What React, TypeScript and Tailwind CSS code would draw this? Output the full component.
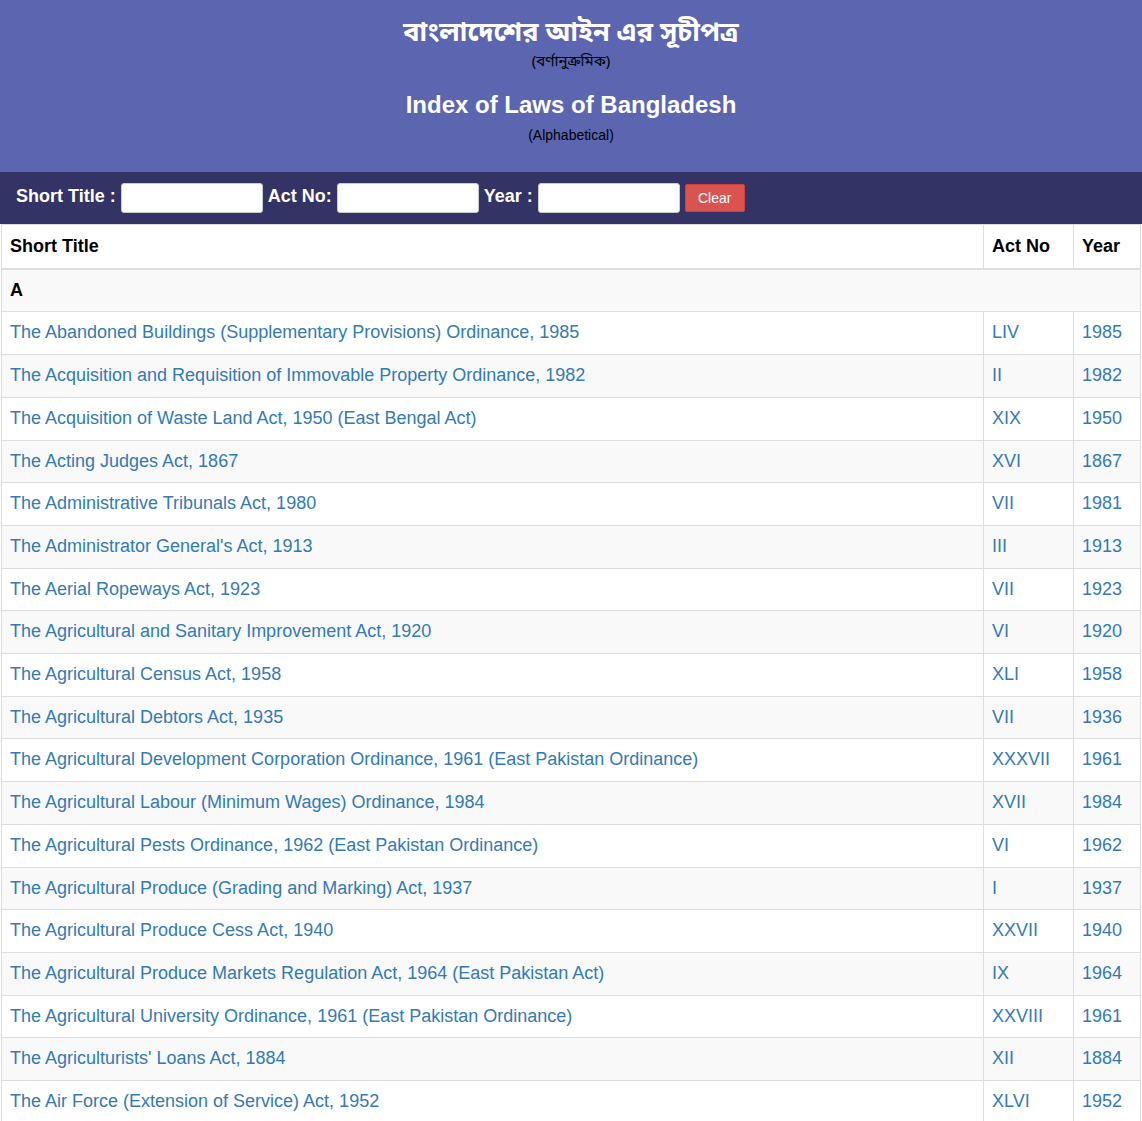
import React from "react";

const rows: [string, string, string][] = [
  ["The Abandoned Buildings (Supplementary Provisions) Ordinance, 1985", "LIV", "1985"],
  ["The Acquisition and Requisition of Immovable Property Ordinance, 1982", "II", "1982"],
  ["The Acquisition of Waste Land Act, 1950 (East Bengal Act)", "XIX", "1950"],
  ["The Acting Judges Act, 1867", "XVI", "1867"],
  ["The Administrative Tribunals Act, 1980", "VII", "1981"],
  ["The Administrator General's Act, 1913", "III", "1913"],
  ["The Aerial Ropeways Act, 1923", "VII", "1923"],
  ["The Agricultural and Sanitary Improvement Act, 1920", "VI", "1920"],
  ["The Agricultural Census Act, 1958", "XLI", "1958"],
  ["The Agricultural Debtors Act, 1935", "VII", "1936"],
  ["The Agricultural Development Corporation Ordinance, 1961 (East Pakistan Ordinance)", "XXXVII", "1961"],
  ["The Agricultural Labour (Minimum Wages) Ordinance, 1984", "XVII", "1984"],
  ["The Agricultural Pests Ordinance, 1962 (East Pakistan Ordinance)", "VI", "1962"],
  ["The Agricultural Produce (Grading and Marking) Act, 1937", "I", "1937"],
  ["The Agricultural Produce Cess Act, 1940", "XXVII", "1940"],
  ["The Agricultural Produce Markets Regulation Act, 1964 (East Pakistan Act)", "IX", "1964"],
  ["The Agricultural University Ordinance, 1961 (East Pakistan Ordinance)", "XXVIII", "1961"],
  ["The Agriculturists' Loans Act, 1884", "XII", "1884"],
  ["The Air Force (Extension of Service) Act, 1952", "XLVI", "1952"],
  ["The Air Force Act, 1953", "VI", "1953"],
];

export default function App() {
  return (
    <div className="w-[1142px] font-['Liberation_Sans',Arial,sans-serif] text-[#333] bg-white">
      <div className="h-[172px] bg-[#5c65b0] flex flex-col items-center pt-[16px]">
        <div className="text-[27px] leading-[36px] font-bold text-white font-['Noto_Sans_Bengali','Noto_Sans','Liberation_Sans',sans-serif]">
          বাংলাদেশের আইন এর সূচীপত্র
        </div>
        <div className="text-[15px] leading-[20px] text-black font-['Noto_Sans_Bengali','Noto_Sans','Liberation_Sans',sans-serif]">
          (বর্ণানুক্রমিক)
        </div>
        <div className="mt-[18px] text-[24px] leading-[30px] font-bold text-white">
          Index of Laws of Bangladesh
        </div>
        <div className="mt-[5px] text-[14px] leading-[20px] text-black">(Alphabetical)</div>
      </div>
      <div className="h-[52px] bg-[#333366] flex items-center pl-[16px] gap-[5px]">
        <span className="text-[18px] font-bold text-white mb-[3px]">Short Title :</span>
        <input className="w-[142px] h-[30px] bg-white border border-[#ccc] rounded-[3px]" />
        <span className="text-[18px] font-bold text-white mb-[3px]">Act No:</span>
        <input className="w-[142px] h-[30px] bg-white border border-[#ccc] rounded-[3px]" />
        <span className="text-[18px] font-bold text-white mb-[3px]">Year :</span>
        <input className="w-[142px] h-[30px] bg-white border border-[#ccc] rounded-[3px]" />
        <button className="w-[60px] h-[28px] bg-[#d9534f] border border-[#d43f3a] rounded-[2px] text-white text-[14px]">
          Clear
        </button>
      </div>
      <div className="pl-px pr-px">
        <table className="w-full border-collapse border border-[#ddd] text-[18px] leading-[1.42857]">
          <thead>
            <tr>
              <th className="text-left font-bold text-black px-[8px] pt-[9px] pb-[8px] border border-[#ddd] border-b-2">Short Title</th>
              <th className="text-left font-bold text-black px-[8px] pt-[9px] pb-[8px] border border-[#ddd] border-b-2 w-[90px]">Act No</th>
              <th className="text-left font-bold text-black px-[8px] pt-[9px] pb-[8px] border border-[#ddd] border-b-2 w-[67px]">Year</th>
            </tr>
          </thead>
          <tbody>
            <tr className="bg-[#f9f9f9]">
              <td colSpan={3} className="px-[8px] py-[8px] border border-[#ddd] font-bold text-black">A</td>
            </tr>
            {rows.map((r, i) => (
              <tr key={i} className={i % 2 === 1 ? "bg-[#f9f9f9]" : "bg-white"}>
                <td className="px-[8px] py-[8px] border border-[#ddd] text-[#337ab7]">{r[0]}</td>
                <td className="px-[8px] py-[8px] border border-[#ddd] text-[#337ab7]">{r[1]}</td>
                <td className="px-[8px] py-[8px] border border-[#ddd] text-[#337ab7]">{r[2]}</td>
              </tr>
            ))}
          </tbody>
        </table>
      </div>
    </div>
  );
}
